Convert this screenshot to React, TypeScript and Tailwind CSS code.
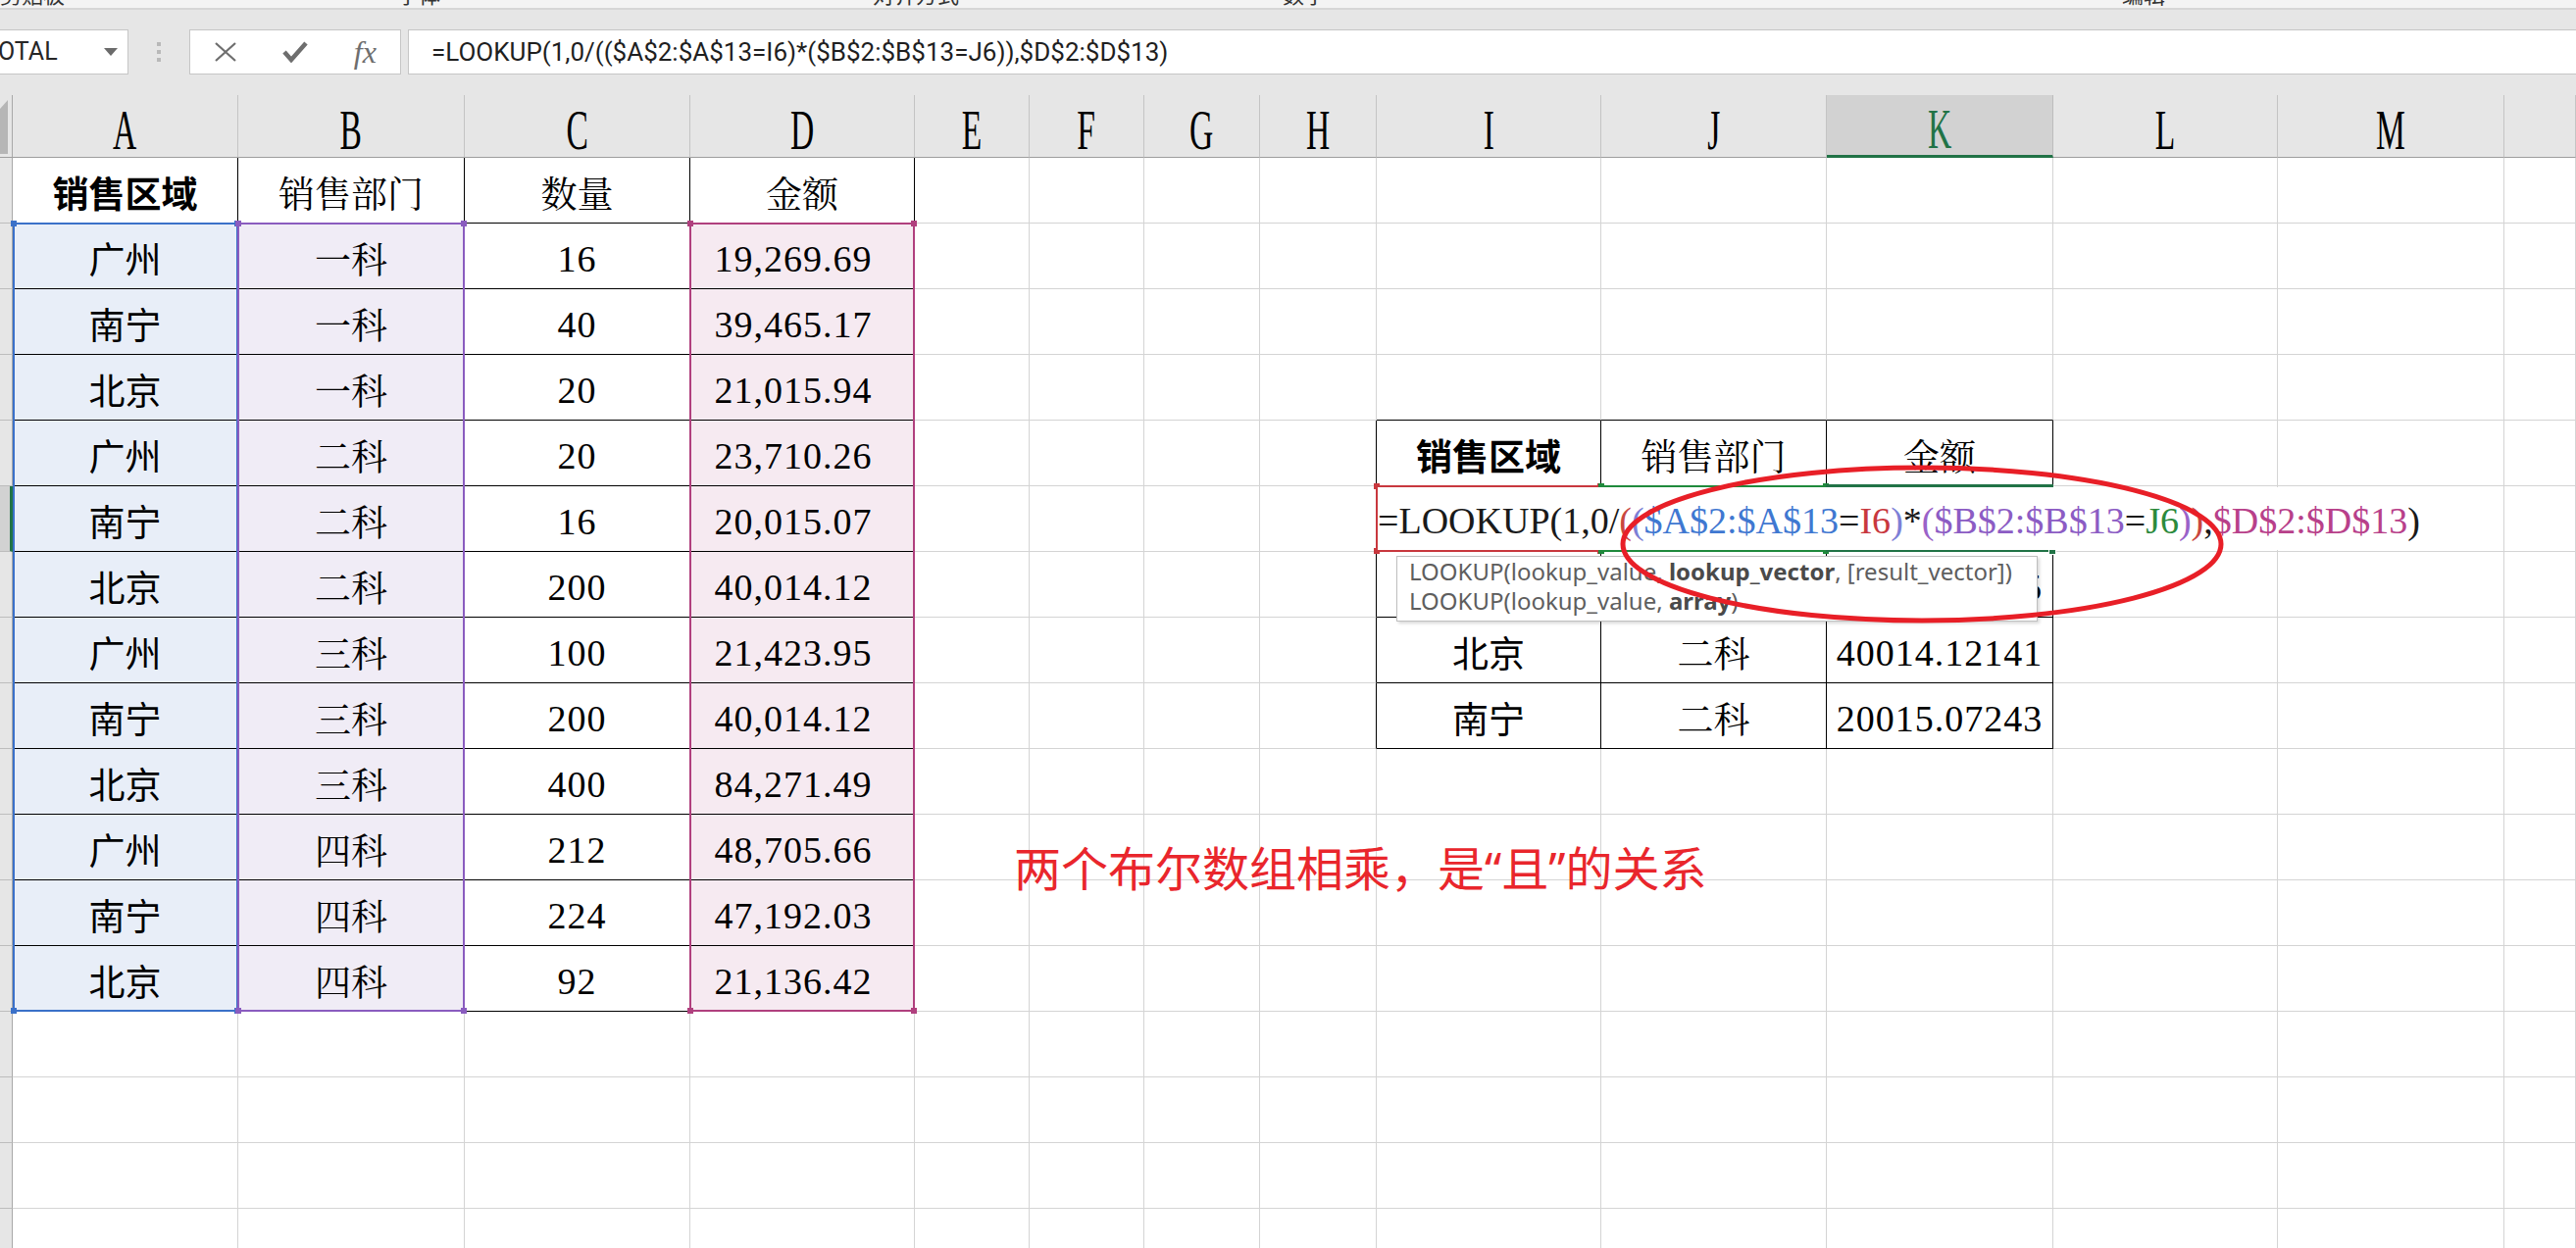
import React from 'react';

type Kind = 'bold' | 'sans' | 'serif' | 'num';

const COLS = ['', 'A', 'B', 'C', 'D', 'E', 'F', 'G', 'H', 'I', 'J', 'K', 'L', 'M', ''];
const ROW_COUNT = 17;

const leftRows = [
    ['广州', '一科', '16', '19,269.69'],
    ['南宁', '一科', '40', '39,465.17'],
    ['北京', '一科', '20', '21,015.94'],
    ['广州', '二科', '20', '23,710.26'],
    ['南宁', '二科', '16', '20,015.07'],
    ['北京', '二科', '200', '40,014.12'],
    ['广州', '三科', '100', '21,423.95'],
    ['南宁', '三科', '200', '40,014.12'],
    ['北京', '三科', '400', '84,271.49'],
    ['广州', '四科', '212', '48,705.66'],
    ['南宁', '四科', '224', '47,192.03'],
    ['北京', '四科', '92', '21,136.42'],
];

const sheet: Record<string, [string, Kind]> = {};
const put = (r: number, c: number, text: string, kind: Kind) => {
    sheet[`${r}-${c}`] = [text, kind];
};

put(1, 1, '销售区域', 'bold');
put(1, 2, '销售部门', 'serif');
put(1, 3, '数量', 'serif');
put(1, 4, '金额', 'serif');
leftRows.forEach((row, i) => {
    put(i + 2, 1, row[0], 'sans');
    put(i + 2, 2, row[1], 'serif');
    put(i + 2, 3, row[2], 'num');
    put(i + 2, 4, row[3], 'num');
});

put(5, 9, '销售区域', 'bold');
put(5, 10, '销售部门', 'serif');
put(5, 11, '金额', 'serif');
put(7, 9, '广州', 'sans');
put(7, 10, '二科', 'serif');
put(7, 11, '23710.25555', 'num');
put(8, 9, '北京', 'sans');
put(8, 10, '二科', 'serif');
put(8, 11, '40014.12141', 'num');
put(9, 9, '南宁', 'sans');
put(9, 10, '二科', 'serif');
put(9, 11, '20015.07243', 'num');

const inTable = (r: number, c: number) =>
    (r >= 1 && r <= 13 && c >= 1 && c <= 4) || (r >= 5 && r <= 9 && c >= 9 && c <= 11);

const kindClass: Record<Kind, string> = {
    bold: "font-['Noto_Sans_CJK_SC',sans-serif] font-bold text-[37px]",
    sans: "font-['Noto_Sans_CJK_SC',sans-serif] text-[37px]",
    serif: "font-['Noto_Serif_CJK_SC','Noto_Sans_CJK_SC',serif] text-[37px]",
    num: "font-['Liberation_Serif',serif] text-[38px] tracking-[1px]",
};

const fillClass = (r: number, c: number) => {
    if (r < 2 || r > 13) return 'bg-white';
    if (c === 1) return 'bg-[#e8eef8]';
    if (c === 2) return 'bg-[#f0ecf6]';
    if (c === 4) return 'bg-[#f6eaf1]';
    return 'bg-white';
};

const formula: [string, string][] = [
    ['=LOOKUP(1,0/', 'text-[#1a1a1a]'],
    ['(', 'text-[#c9473f]'],
    ['(', 'text-[#7d7fd6]'],
    ['$A$2:$A$13', 'text-[#3f78d1]'],
    ['=', 'text-[#1a1a1a]'],
    ['I6', 'text-[#c8383e]'],
    [')', 'text-[#7d7fd6]'],
    ['*', 'text-[#1a1a1a]'],
    ['(', 'text-[#9a62c8]'],
    ['$B$2:$B$13', 'text-[#8c5cc4]'],
    ['=', 'text-[#1a1a1a]'],
    ['J6', 'text-[#2c8a3c]'],
    [')', 'text-[#9a62c8]'],
    [')', 'text-[#c9473f]'],
    [',', 'text-[#1a1a1a]'],
    ['$D$2:$D$13', 'text-[#b8408a]'],
    [')', 'text-[#1a1a1a]'],
];

function Handles({ color }: { color: string }) {
    return (
        <>
            <span className={`absolute -left-[4px] -top-[4px] size-[6px] ${color}`} />
            <span className={`absolute -right-[4px] -top-[4px] size-[6px] ${color}`} />
            <span className={`absolute -left-[4px] -bottom-[4px] size-[6px] ${color}`} />
            <span className={`absolute -right-[4px] -bottom-[4px] size-[6px] ${color}`} />
        </>
    );
}

function FormulaBar() {
    return (
        <div className="bg-[#e6e6e6] pt-[20px] pb-[21px]">
            <div className="flex h-[46px]">
                {/* name box */}
                <div className="flex w-[131px] items-center justify-between border border-l-0 border-[#c6c6c6] bg-white pr-[10px]">
                    <span className="-ml-[2px] font-['Roboto',sans-serif] text-[25px] text-[#262626]">OTAL</span>
                    <svg width="14" height="8" viewBox="0 0 14 8">
                        <polygon points="0,0 14,0 7,8" fill="#6b6b6b" />
                    </svg>
                </div>
                <div className="flex w-[62px] flex-col items-center justify-center gap-[4px]">
                    <span className="size-[4px] bg-[#b9b9b9]" />
                    <span className="size-[4px] bg-[#b9b9b9]" />
                    <span className="size-[4px] bg-[#b9b9b9]" />
                </div>
                {/* cancel / enter / fx */}
                <div className="flex w-[216px] border border-[#c6c6c6] bg-white">
                    <div className="flex w-[72px] items-center justify-center">
                        <svg width="24" height="20" viewBox="0 0 24 20">
                            <path d="M2 1 L22 19 M22 1 L2 19" stroke="#6e6e6e" strokeWidth="2.2" />
                        </svg>
                    </div>
                    <div className="flex w-[72px] items-center justify-center">
                        <svg width="26" height="22" viewBox="0 0 26 22">
                            <path d="M2 11 L9 19 L24 2" fill="none" stroke="#6e6e6e" strokeWidth="4.5" />
                        </svg>
                    </div>
                    <div className="flex w-[72px] items-center justify-center">
                        <span className="font-['Liberation_Serif',serif] text-[32px] italic leading-none text-[#6e6e6e]">fx</span>
                    </div>
                </div>
                <div className="w-[7px]" />
                <div className="flex flex-1 items-center border border-r-0 border-[#c6c6c6] bg-white pl-[23px]">
                    <span className="font-['Roboto',sans-serif] text-[26px] text-[#1f1f1f]">
                        =LOOKUP(1,0/(($A$2:$A$13=I6)*($B$2:$B$13=J6)),$D$2:$D$13)
                    </span>
                </div>
            </div>
        </div>
    );
}

function ColumnHeader({ c }: { c: number }) {
    if (c === 0) {
        return (
            <div className="relative border-r border-b border-r-[#a8a8a8] border-b-[#9e9e9e] bg-[#e6e6e6]">
                <svg className="absolute left-0 top-[5px]" width="9" height="56" viewBox="0 0 9 56">
                    <polygon points="8,0 8,55 0,55 0,9" fill="#b6b6b6" />
                </svg>
            </div>
        );
    }
    const active = c === 11;
    return (
        <div
            className={
                active
                    ? 'flex items-center justify-center border-r border-r-[#bdbdbd] border-b-[3px] border-b-[#217346] bg-[#d2d2d2] pt-[8px] text-[#217346]'
                    : 'flex items-center justify-center border-r border-b border-r-[#c4c4c4] border-b-[#9e9e9e] bg-[#e6e6e6] pt-[8px] text-black'
            }
        >
            <span className="inline-block scale-x-[0.6] font-['Liberation_Serif',serif] text-[56px] leading-none">
                {COLS[c]}
            </span>
        </div>
    );
}

function Cell({ r, c }: { r: number; c: number }) {
    if (c === 0) {
        return r === 6 ? (
            <div className="border-r-[3px] border-b border-r-[#217346] border-b-[#bdbdbd] bg-[#d2d2d2]" />
        ) : (
            <div className="border-r border-b border-r-[#a8a8a8] border-b-[#bdbdbd] bg-[#e6e6e6]" />
        );
    }
    const right = inTable(r, c) || inTable(r, c + 1) ? 'border-r-black' : 'border-r-[#d4d4d4]';
    const bottom = inTable(r, c) || inTable(r + 1, c) ? 'border-b-black' : 'border-b-[#d4d4d4]';
    const data = sheet[`${r}-${c}`];
    const pad = c === 4 && r > 1 ? 'pr-[18px]' : '';
    return (
        <div
            className={`flex items-center justify-center overflow-hidden whitespace-nowrap border-r border-b pt-[6px] text-black ${right} ${bottom} ${fillClass(r, c)} ${pad}`}
        >
            {data && <span className={kindClass[data[1]]}>{data[0]}</span>}
        </div>
    );
}

function Grid() {
    const cells: React.ReactNode[] = [];
    COLS.forEach((_, c) => cells.push(<ColumnHeader key={`h-${c}`} c={c} />));
    for (let r = 1; r <= ROW_COUNT; r++) {
        COLS.forEach((_, c) => cells.push(<Cell key={`${r}-${c}`} r={r} c={c} />));
    }

    return (
        <div className="relative">
            <div className="grid grid-cols-[13px_230px_231px_230px_229px_117px_117px_118px_119px_229px_230px_231px_229px_231px_73px] grid-rows-[64px_repeat(17,67px)]">
                {cells}
            </div>

            {/* reference highlights while editing */}
            <div className="pointer-events-none absolute inset-0 grid grid-cols-[13px_230px_231px_230px_229px_117px_117px_118px_119px_229px_230px_231px_229px_231px_73px] grid-rows-[64px_repeat(17,67px)]">
                <div className="relative col-start-2 col-end-3 row-start-3 row-end-15 -mt-px border-2 border-[#3b71c9]">
                    <Handles color="bg-[#3b71c9]" />
                </div>
                <div className="relative col-start-3 col-end-4 row-start-3 row-end-15 -mt-px -ml-px border-2 border-[#8a5cbf]">
                    <Handles color="bg-[#8a5cbf]" />
                </div>
                <div className="relative col-start-5 col-end-6 row-start-3 row-end-15 -mt-px -ml-px border-2 border-[#b0407e]">
                    <Handles color="bg-[#b0407e]" />
                </div>
                <div className="relative col-start-10 col-end-11 row-start-7 row-end-8 -mt-px -ml-px border-2 border-[#c8383e]">
                    <Handles color="bg-[#c8383e]" />
                </div>
                <div className="relative col-start-11 col-end-12 row-start-7 row-end-8 -mt-px -ml-px border-2 border-[#1f8a3c]">
                    <Handles color="bg-[#1f8a3c]" />
                </div>
                <div className="relative col-start-12 col-end-13 row-start-7 row-end-8 -mt-[2px] -ml-px border-[3px] border-[#217346]">
                    <span className="absolute -right-[6px] -bottom-[6px] size-[8px] border border-white bg-[#217346]" />
                </div>

                {/* in-cell editor */}
                <div className="relative z-10 col-start-10 col-end-15 row-start-7 row-end-8 flex pt-[1px] pb-[2px] pl-[1px]">
                    <div className="flex h-full items-center bg-white pr-[4px] pt-[4px] font-['Liberation_Serif',serif] text-[38px] leading-none">
                        {formula.map(([t, cls], i) => (
                            <span key={i} className={cls}>
                                {t}
                            </span>
                        ))}
                    </div>
                </div>
            </div>
        </div>
    );
}

export default function App() {
    return (
        <div className="relative h-[1273px] w-[2627px] overflow-hidden bg-white">
            {/* cut-off ribbon labels */}
            <div className="relative h-[8px] overflow-hidden bg-[#f3f3f3] font-['Noto_Sans_CJK_SC',sans-serif] text-[22px] leading-none text-[#333]">
                <span className="absolute left-0 top-[-18px]">剪贴板</span>
                <span className="absolute left-[405px] top-[-18px]">字体</span>
                <span className="absolute left-[890px] top-[-18px]">对齐方式</span>
                <span className="absolute left-[1308px] top-[-18px]">数字</span>
                <span className="absolute left-[2164px] top-[-18px]">编辑</span>
            </div>
            <div className="h-[2px] bg-[#d6d6d6]" />
            <FormulaBar />
            <Grid />

            {/* function tooltip */}
            <div className="absolute z-20 left-[1424px] top-[567px] h-[67px] w-[654px] border border-[#bfbfbf] bg-white pl-[12px] font-['Noto_Sans',sans-serif] text-[24px] leading-[30px] text-[#5e5e5e] shadow-[2px_2px_3px_rgba(0,0,0,0.15)]">
                <div>
                    LOOKUP(lookup_value, <b className="text-[#4a4a4a]">lookup_vector</b>, [result_vector])
                </div>
                <div>
                    LOOKUP(lookup_value, <b className="text-[#4a4a4a]">array</b>)
                </div>
            </div>

            {/* hand-drawn ellipse */}
            <svg className="pointer-events-none absolute z-30 left-[1650px] top-[472px]" width="620" height="166" viewBox="0 0 620 166">
                <ellipse cx="310" cy="83" rx="305" ry="78" fill="none" stroke="#e81f27" strokeWidth="5" />
            </svg>

            {/* note */}
            <div className="absolute left-[1034px] top-[862px] whitespace-nowrap font-['Noto_Sans','Noto_Sans_CJK_SC',sans-serif] text-[48px] leading-none text-[#e9262c]">
                两个布尔数组相乘，是“且”的关系
            </div>
        </div>
    );
}
